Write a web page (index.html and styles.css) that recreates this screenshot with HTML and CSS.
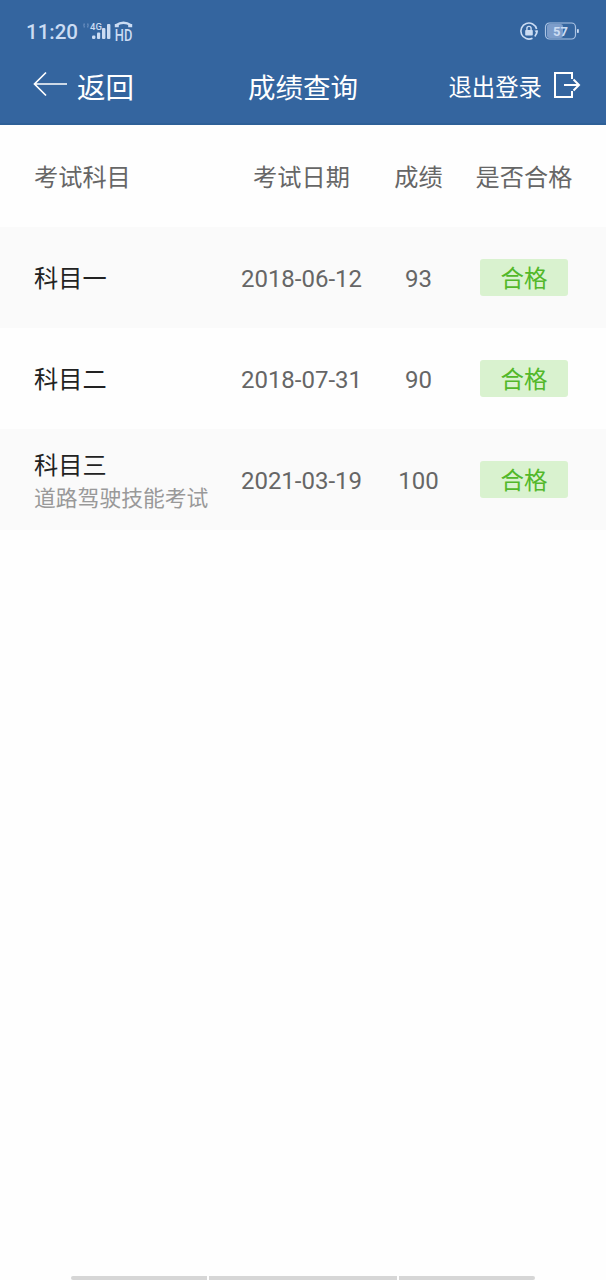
FILE: index.html
```html
<!DOCTYPE html>
<html lang="zh-CN">
<head>
  <meta charset="UTF-8">
  <meta name="viewport" content="width=device-width, initial-scale=1">
  <title>成绩查询</title>
  <link rel="stylesheet" href="styles.css">
</head>
<body>

  <header>
    <div class="status">
      <span class="time">11:20</span>
      <svg class="signal" width="56" height="28" viewBox="0 0 56 28">
        <path d="M2.500 5.500q-1.500 2 0 4M5.500 5.500q1.500 2 0 4" fill="none" stroke="#6389bb" stroke-width="1.500"/>
        <text x="8" y="11.500" font-size="9.500" font-weight="500">4G</text>
        <rect x="10" y="17.500" width="3.400" height="3.500" rx="1.200"/>
        <rect x="15" y="14.500" width="3.200" height="6.500" rx="1"/>
        <rect x="20" y="10" width="3.400" height="11" rx="1"/>
        <rect x="25" y="6" width="3.400" height="15" rx="1"/>
        <path d="M34 7.200q7.500-5 15 0" fill="none" stroke="#cbdcf3" stroke-width="2.400"/>
        <path d="M32.800 6v3.300h4v-3zM50.200 6v3.300h-4v-3z"/>
        <text x="32.800" y="22.500" font-size="16" font-weight="500" textLength="17.500" lengthAdjust="spacingAndGlyphs">HD</text>
      </svg>
      <svg class="power" width="62" height="20" viewBox="0 0 62 20">
        <path d="M13.500 17.200A8 8 0 1 1 17.600 8M17.900 9.500A8 8 0 0 1 15.800 15.500" fill="none" stroke="#cbdcf3" stroke-width="1.600"/>
        <path d="M15.500 9.500h3.500l-1 3.500z"/>
        <rect x="6.200" y="9" width="7.600" height="5.500" rx=".8"/>
        <path d="M7.900 9.500V7.500a2.100 2.100 0 0 1 4.200 0v2" fill="none" stroke="#cbdcf3" stroke-width="1.400"/>
        <rect x="28" y="3" width="16" height="14" rx="2.500" fill="#7d9dca"/>
        <rect x="26.500" y="2" width="30" height="16" rx="4" fill="none" stroke="#abc3e3" stroke-width="1.200"/>
        <rect x="58" y="8" width="1.800" height="4" rx=".8"/>
        <text x="41.500" y="14.700" font-size="13" font-weight="700" text-anchor="middle">57</text>
      </svg>
    </div>

    <nav>
      <a class="back">
        <svg width="35" height="28" viewBox="0 0 35 28">
          <path d="M34 14H2M13 2.500L1.500 14L13 25.500" fill="none" stroke="#fff" stroke-width="1.700"/>
        </svg>
        <span>返回</span>
      </a>
      <h1>成绩查询</h1>
      <a class="logout">
        <span>退出登录</span>
        <svg width="28" height="28" viewBox="0 0 28 28">
          <path d="M19 8V2H2V26H19V20M11 14H26M20.500 8.500L26 14L20.500 19.500" fill="none" stroke="#fff" stroke-width="2"/>
        </svg>
      </a>
    </nav>
  </header>

  <main>
    <div class="row head">
      <div>考试科目</div>
      <div>考试日期</div>
      <div>成绩</div>
      <div>是否合格</div>
    </div>
    <div class="row gray">
      <div class="subject">科目一</div>
      <div class="num">2018-06-12</div>
      <div class="num">93</div>
      <div><span class="pass">合格</span></div>
    </div>
    <div class="row">
      <div class="subject">科目二</div>
      <div class="num">2018-07-31</div>
      <div class="num">90</div>
      <div><span class="pass">合格</span></div>
    </div>
    <div class="row gray">
      <div class="subject double">科目三<small>道路驾驶技能考试</small></div>
      <div class="num">2021-03-19</div>
      <div class="num">100</div>
      <div><span class="pass">合格</span></div>
    </div>
  </main>

  <!-- gesture bar -->
  <footer>
    <i></i><i></i><i></i>
  </footer>

</body>
</html>
```
FILE: styles.css
```css
:root {
  --blue: #34659f;
  --status: #cbdcf3;
  --gray: #fafafa;
}

* {
  box-sizing: border-box;
}

body {
  font-family: Roboto, 'Noto Sans CJK SC', sans-serif;
  background: #fefefe;
  color: #666;
  margin: 0;
  height: 1280px;
  display: flex;
  flex-direction: column;
}

header {
  height: 125px;
  background: var(--blue);
  border-bottom: 2px solid #2e6097;
  color: white;
}

.status {
  height: 48px;
  padding: 14px 25px 0 26px;
  display: flex;
  align-items: center;
  color: var(--status);
}

.status svg {
  fill: var(--status);
}

.time {
  font-size: 20.500px;
  font-weight: 500;
  line-height: 24px;
  padding-top: 1px;
}

.signal {
  margin-left: 4px;
  margin-top: 2px;
}

.power {
  margin-left: auto;
}

nav {
  height: 75px;
  padding: 0 25px;
  display: grid;
  grid-template-columns: 1fr auto 1fr;
  align-items: center;
}

nav a,
nav h1 {
  display: flex;
  align-items: center;
  margin: 0;
  font-weight: 400;
}

nav h1 {
  font-size: 27.500px;
}

.back {
  font-size: 28.500px;
  gap: 9px;
  padding-left: 8px;
}

.back svg {
  margin-bottom: 3px;
}

.logout {
  font-size: 23.400px;
  gap: 11px;
  justify-content: flex-end;
}

.logout svg {
  margin-bottom: 2px;
}

main {
  flex: 1;
}

.row {
  height: 101px;
  padding-left: 34px;
  display: grid;
  grid-template-columns: 195px 145px 89px 122px;
  align-items: center;
  font-size: 24.200px;
  line-height: 32px;
  text-align: center;
}

.head {
  height: 102px;
  padding-top: 4px;
}

.row > :first-child {
  text-align: left;
}

.gray {
  background: var(--gray);
}

.subject {
  padding-top: 3px;
  color: #222;
}

.double {
  padding-top: 7px;
}

.subject small {
  display: block;
  font-size: 21.800px;
  line-height: 34px;
  color: #999;
}

.num {
  padding-top: 2px;
  font-size: 24px;
}

.pass {
  display: block;
  width: 88px;
  height: 37px;
  margin: 0 auto;
  border-radius: 3px;
  background: #d9f2cf;
  color: #52b82a;
  font-size: 23.500px;
  line-height: 41px;
}

footer {
  display: flex;
  justify-content: center;
  gap: 2px;
}

footer i {
  width: 136px;
  height: 4px;
  background: #d6d6d6;
}

footer i:nth-child(2) {
  width: 188px;
}

footer i:first-child {
  border-radius: 2px 0 0 2px;
}

footer i:last-child {
  border-radius: 0 2px 2px 0;
}
```
